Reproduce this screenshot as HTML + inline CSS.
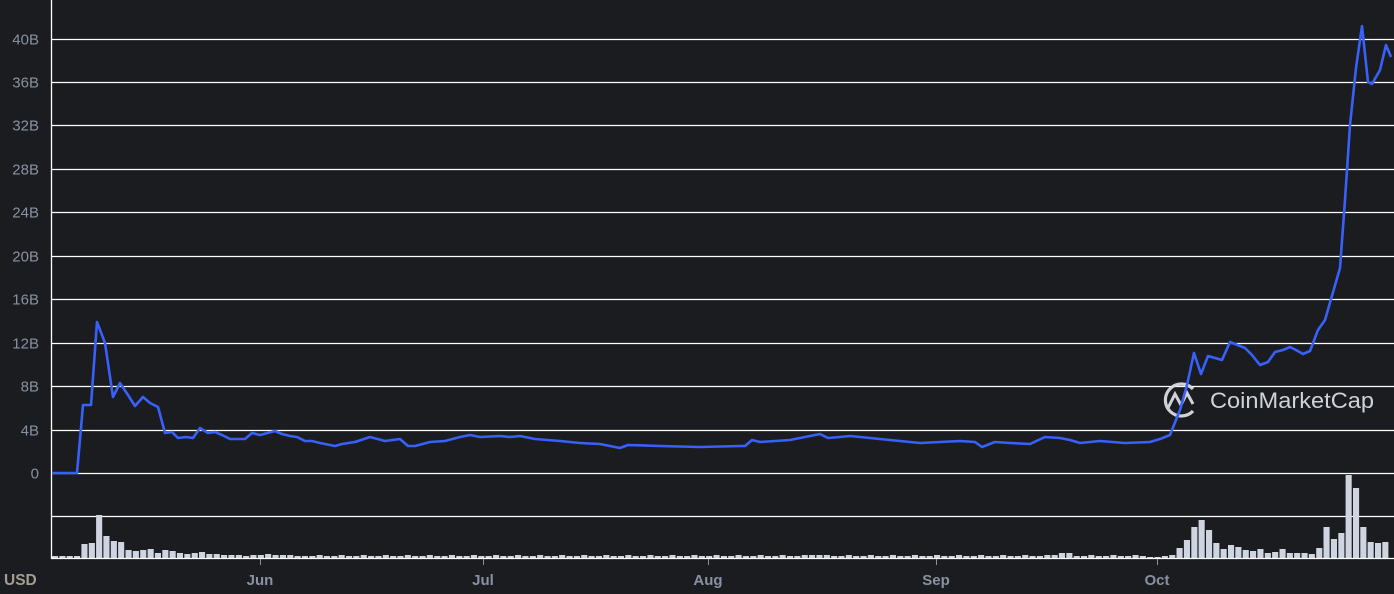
<!DOCTYPE html>
<html><head><meta charset="utf-8"><style>
html,body{margin:0;padding:0;background:#1b1c1f;width:1394px;height:594px;overflow:hidden;font-family:"Liberation Sans",sans-serif}
svg{position:absolute;left:0;top:0}
</style></head><body>
<svg id="s" width="1394" height="594" xmlns="http://www.w3.org/2000/svg">
<rect width="1394" height="594" fill="#1b1c1f"/>
<g id="grid" stroke="#ffffff" stroke-width="1.3"></g>
<g id="ylab" fill="#8891a3" font-size="15" text-anchor="end"></g>
<g id="bars" fill="#cfd5e0"></g>
<line x1="51.5" y1="0" x2="51.5" y2="559" stroke="#fff" stroke-width="1.3"/>
<line x1="51" y1="558.5" x2="1394" y2="558.5" stroke="#fff" stroke-width="1.3"/>
<g fill="none" stroke="#d8dce4" stroke-width="3.2" opacity="0.95">
<path d="M1193 389 A16 16 0 1 0 1193 411"/>
<path d="M1168 408 L1175 394 L1181 405 L1187 393 L1193 404" stroke-width="3"/>
</g>
<text x="1210" y="408" fill="#d8dce4" font-size="22" textLength="164" lengthAdjust="spacingAndGlyphs" opacity="0.95">CoinMarketCap</text>
<polyline fill="none" stroke="#3861fb" stroke-width="2.6" stroke-linejoin="round" points="52,473 77,473 83,405 91,405 97,322 105,343 113,397 120,383 128,395 135,406 143,397 150,403 158,407 165,433 172,432 178,438 186,437 193,438 200,428 208,433 215,432 222,435 230,439 245,439 252,433 260,435 275,431 282,434 290,436 297,437 305,441 312,441 320,443 335,446 342,444 355,442 370,437 385,441 400,439 408,446 415,446 430,442 445,441 460,437 470,435 480,437 500,436 510,437 520,436 535,439 560,441 580,443 600,444 620,448 628,445 660,446 700,447 740,446 745,446 752,440 760,442 790,440 800,438 820,434 828,438 840,437 850,436 880,439 900,441 920,443 940,442 960,441 975,442 982,447 995,442 1010,443 1030,444 1045,437 1060,438 1070,440 1080,443 1100,441 1125,443 1150,442 1160,439 1170,435 1180,410 1187,385 1194,353 1201,374 1208,356 1222,360 1230,342 1245,348 1252,355 1260,365 1268,362 1275,352 1283,350 1290,347 1296,350 1303,354 1310,351 1318,330 1325,320 1340,268 1345,200 1350,125 1356,68 1362,26 1368,82 1372,84 1380,70 1386,45 1391,57"/>
<g stroke="#8891a3" stroke-width="1"><line x1="260.5" y1="559" x2="260.5" y2="565"/><line x1="483.5" y1="559" x2="483.5" y2="565"/><line x1="708.5" y1="559" x2="708.5" y2="565"/><line x1="936.5" y1="559" x2="936.5" y2="565"/><line x1="1157.5" y1="559" x2="1157.5" y2="565"/></g>
<g fill="#8891a3" font-size="15" font-weight="bold" text-anchor="middle">
<text x="260" y="585">Jun</text><text x="483" y="585">Jul</text><text x="708" y="585">Aug</text><text x="936" y="585">Sep</text><text x="1157" y="585">Oct</text>
</g>
<text x="4" y="585" fill="#a39d92" font-size="15.5" font-weight="bold">USD</text>
</svg>
<script>
var ns="http://www.w3.org/2000/svg",g=document.getElementById('grid'),yl=document.getElementById('ylab'),b=document.getElementById('bars');
var labs=["40B","36B","32B","28B","24B","20B","16B","12B","8B","4B","0"];
for(var i=0;i<12;i++){var y=Math.round(38.5+i*43.45)+0.5;var l=document.createElementNS(ns,'line');l.setAttribute('x1',52);l.setAttribute('x2',1394);l.setAttribute('y1',y);l.setAttribute('y2',y);g.appendChild(l);
if(i<11){var t=document.createElementNS(ns,'text');t.setAttribute('x',39);t.setAttribute('y',y+5);t.textContent=labs[i];yl.appendChild(t);}}
var early=[2,2,2,2,14,15,43,22,17,16,8,7,8,9,5,8,7,5,4,5,6,4,4,3,3,3,2,3,3,4,3,3,3,2];
var late=[1,1,2,3,10,18,31,38,28,15,9,13,11,8,7,9,5,6,9,5,5,5,4,10,31,19,25,83,70,31,16,15,16];
var step=7.35,n=182;
for(var k=0;k<n;k++){var v;if(k<early.length)v=early[k];else if(k>=n-late.length)v=late[k-(n-late.length)];else{v=2+((k*7)%3==0?1:0);if(k>=102&&k<=104)v=3;if(k>=136&&k<=136)v=3;if(k>=137&&k<=138)v=5;}
var x=52+k*step;var r=document.createElementNS(ns,'rect');r.setAttribute('x',x.toFixed(1));r.setAttribute('width',(step-1.2).toFixed(1));r.setAttribute('y',558-v);r.setAttribute('height',v);b.appendChild(r);}
</script>
</body></html>
